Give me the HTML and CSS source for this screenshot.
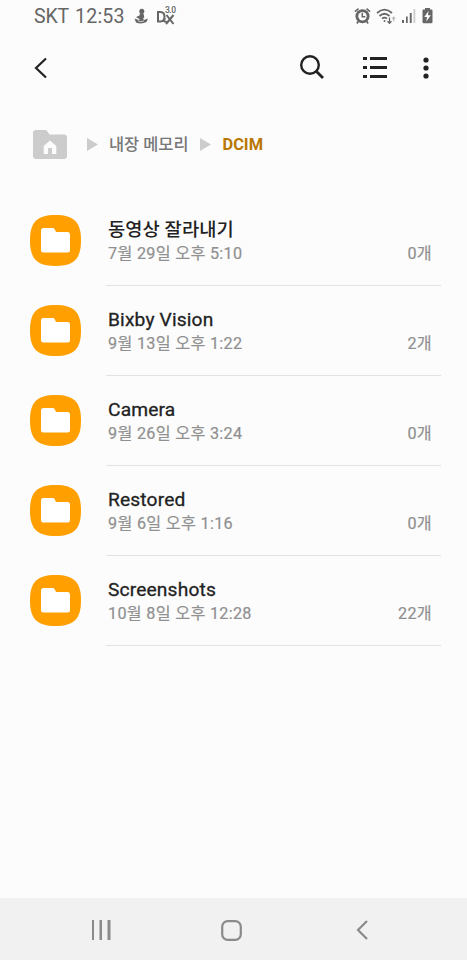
FILE: index.html
```html
<!DOCTYPE html>
<html lang="ko">
<head>
<meta charset="utf-8">
<title>DCIM</title>
<link rel="stylesheet" href="styles.css">
</head>
<body>
<svg class="defs" width="0" height="0">
  <symbol id="folder" viewBox="0 0 51 51">
    <path fill="#ffa000" d="M25.500 0C44 0 51 7 51 25.500S44 51 25.500 51 0 44 0 25.500 7 0 25.500 0Z"/>
    <path fill="#fff" d="M13.500 13h9q1.500 0 2.200 1.300l1.300 2.700h11.500q2.500 0 2.500 2.500v15.500q0 2.500-2.500 2.500h-24q-2.500 0-2.500-2.500v-19.500q0-2.500 2.500-2.500Z"/>
  </symbol>
</svg>
<div class="screen">
  <header class="status">
    <span class="carrier">SKT</span><span class="clock">12:53</span>
    <svg class="st-person" width="16" height="17" viewBox="0 0 16 17" fill="#666"><circle cx="8.800" cy="3.300" r="2.500"/><path d="M7 5l3.500.5.8 4L8 12l-5-3 3.500-1.500Z"/><path d="M1.500 10.500l4 1.500 4-2.500 1.500 2.500 4-1.500-1.500 3.500q-5 2.500-10.500.500Z"/><path stroke="#fcfcfc" stroke-width=".7" fill="none" d="M5 12.800l3 1 3-1"/></svg>
    <span class="dex"><svg width="20" height="20" viewBox="0 0 20 20" fill="none" stroke="#666" stroke-width="2"><path d="M2 6v9.500h2.500q4 0 4-4.700T4.500 6Z"/><path d="M10.500 9l7 9M17.500 9L10 18"/><path stroke-width="1" d="M6 15.500h5M9 12v5"/></svg><small>3.0</small></span>
    <div class="st-right">
      <svg width="17" height="18" viewBox="0 0 17 18" fill="#666"><circle cx="8.500" cy="9.300" r="7"/><path d="M4 1L.5 4l1 1.300L5 2.300ZM13 1l3.500 3-1 1.300L12 2.300ZM3.500 14l1.500 1-1.500 2-1.300-1ZM13.500 14L12 15l1.500 2 1.300-1Z"/><circle cx="8.500" cy="9.300" r="4.200" fill="#fcfcfc"/><path fill="none" stroke="#666" stroke-width="1.500" d="M8.300 5.800v4h3"/></svg>
      <svg class="wifi" width="20" height="18" viewBox="0 0 20 18" fill="none" stroke="#666" stroke-width="1.700"><path d="M1 6Q8.500-.8 16 6M3.500 9q5-4.500 10 0M6 11.700q2.500-2.200 5 0"/><circle cx="8.500" cy="14" r="1" fill="#666" stroke="none"/><path stroke-width="1.300" d="M13.500 10.500v6M11.500 14.300l2 2 2-2"/><path stroke="#bbb" stroke-width="1.200" d="M17.700 14.500V10M16.300 12l1.400-2 1.400 2"/></svg>
      <svg class="signal" width="14" height="16" viewBox="0 0 14 16"><path fill="#666" d="M0 12h2v3H0ZM4 8.500h1.700V15H4ZM7.800 5h1.900v10H7.800Z"/><path fill="#ccc" d="M11.500 1h1.800v14h-1.800Z"/></svg>
      <svg class="battery" width="11" height="16" viewBox="0 0 11 16"><path fill="#666" d="M3 0h5v1.500h1.500q1 0 1 1V14q0 1.300-1.300 1.300H1.800Q.5 15.300.5 14V2.500q0-1 1-1H3Z"/><path fill="#fff" d="M6.500 3L2.300 9H5l-.7 4.500L8.800 7.300H6Z"/></svg>
    </div>
  </header>
  <nav class="toolbar">
    <svg class="back" width="14" height="22" viewBox="0 0 14 22" fill="none" stroke="#222" stroke-width="2.200"><path d="M12 1.500L2 11l10 9.500"/></svg>
    <svg class="search" width="24" height="24" viewBox="0 0 24 24" fill="none" stroke="#222" stroke-width="2.400"><circle cx="10" cy="10" r="8.800"/><path stroke-width="2.800" d="M16 16l7 7"/></svg>
    <svg class="list" width="24" height="22" viewBox="0 0 24 22" fill="#222"><path d="M0 0h4v3H0ZM7 0h17v3H7ZM0 9h4v3H0ZM7 9h17v3H7ZM0 18h4v3H0ZM7 18h17v3H7Z"/></svg>
    <svg class="more" width="6" height="22" viewBox="0 0 6 22" fill="#222"><circle cx="3" cy="3" r="2.600"/><circle cx="3" cy="11" r="2.600"/><circle cx="3" cy="19" r="2.600"/></svg>
  </nav>
  <div class="crumbs">
    <svg width="34" height="29" viewBox="0 0 34 29"><path fill="#ccc" d="M3 0h9q1.500 0 2.300 1.300L16.500 4.500H31q3 0 3 3V26q0 3-3 3H3q-3 0-3-3V3Q0 0 3 0Z"/><path fill="#fcfcfc" d="M17 10.500l6.300 5.500v8h-4.300v-6h-4v6h-4.300v-8Z"/></svg>
    <svg class="tri1" width="11" height="13" viewBox="0 0 11 13"><path fill="#ccc" d="M0 0l11 6.500L0 13Z"/></svg>
    <span class="crumb">내장 메모리</span>
    <svg class="tri2" width="11" height="13" viewBox="0 0 11 13"><path fill="#ccc" d="M0 0l11 6.500L0 13Z"/></svg>
    <span class="crumb current">DCIM</span>
  </div>
  <main>
    <div class="row"><svg class="icon"><use href="#folder"/></svg><div class="info"><div class="name ko">동영상 잘라내기</div><div class="meta"><span>7월 29일 오후 5:10</span><span>0개</span></div></div></div>
    <div class="row"><svg class="icon"><use href="#folder"/></svg><div class="info"><div class="name">Bixby Vision</div><div class="meta"><span>9월 13일 오후 1:22</span><span>2개</span></div></div></div>
    <div class="row"><svg class="icon"><use href="#folder"/></svg><div class="info"><div class="name">Camera</div><div class="meta"><span>9월 26일 오후 3:24</span><span>0개</span></div></div></div>
    <div class="row"><svg class="icon"><use href="#folder"/></svg><div class="info"><div class="name">Restored</div><div class="meta"><span>9월 6일 오후 1:16</span><span>0개</span></div></div></div>
    <div class="row"><svg class="icon"><use href="#folder"/></svg><div class="info"><div class="name">Screenshots</div><div class="meta"><span>10월 8일 오후 12:28</span><span>22개</span></div></div></div>
  </main>
  <footer class="navbar">
    <svg width="19" height="20" viewBox="0 0 19 20" fill="#8a8a8a"><path d="M0 0h2v20H0ZM7.500 0h2.500v20H7.500ZM15.500 0h3v20h-3Z"/></svg>
    <svg class="home" width="21" height="21" viewBox="0 0 21 21" fill="none" stroke="#8a8a8a" stroke-width="2.200"><rect x="1.200" y="1.200" width="18.600" height="18.600" rx="5.500"/></svg>
    <svg class="prev" width="12" height="20" viewBox="0 0 12 20" fill="none" stroke="#8a8a8a" stroke-width="2.200"><path d="M11 1L2 10l9 9"/></svg>
  </footer>
</div>
</body>
</html>
```
FILE: styles.css
```css
* { box-sizing: border-box; }
body { margin: 0; background: #fcfcfc; font-family: Roboto, "Noto Sans CJK KR", sans-serif; }
svg { display: block; flex: none; }
.defs { position: absolute; }
.screen { width: 467px; height: 960px; display: flex; flex-direction: column; overflow: hidden; }
.status { height: 32px; padding: 0 34px 0 34px; display: flex; align-items: center; color: #666; font-size: 19.500px; white-space: nowrap; }
.carrier { width: 36px; letter-spacing: -.2px; }
.clock { width: 50px; margin-left: 5px; font-size: 19.600px; letter-spacing: .2px; }
.st-person { margin-left: 8px; }
.dex { position: relative; margin-left: 7px; }
.dex small { position: absolute; left: 9px; top: 0; font-size: 8.500px; line-height: 9px; font-weight: 500; letter-spacing: -.5px; }
.st-right { margin-left: auto; display: flex; align-items: center; }
.wifi { margin-left: 5px; }
.signal { margin-left: 6px; }
.battery { margin-left: 6px; }
.toolbar { height: 71px; padding: 0 38px 0 34px; display: flex; align-items: center; }
.search { margin-left: 252px; margin-top: -1px; }
.list { margin-left: 39px; }
.more { margin-left: 36px; }
.crumbs { height: 82px; padding-left: 33px; display: flex; align-items: center; }
.crumb { padding-top: 2px; font-size: 16.400px; line-height: 24px; font-weight: 500; color: #777; white-space: nowrap; }
.current { font-weight: 700; color: #b97600; }
.tri1 { margin: 0 11px 0 20px; }
.tri2 { margin: 0 11px 0 12px; }
main { margin-top: 11px; flex: 1; }
.row { height: 90px; padding: 0 26px 0 30px; display: flex; align-items: center; }
.icon { width: 51px; height: 51px; margin-bottom: 1px; }
.info { height: 90px; flex: 1; margin-left: 25px; padding: 20px 9px 0 2px; border-bottom: 1px solid #e2e2e2; }
.name { height: 26px; line-height: 28px; font-size: 19.200px; font-weight: 400; -webkit-text-stroke: .3px #222; color: #222; letter-spacing: .15px; }
.ko { font-size: 18.700px; font-weight: 500; letter-spacing: .1px; -webkit-text-stroke: 0; line-height: 29px; }
.meta { display: flex; justify-content: space-between; height: 24px; line-height: 23px; font-size: 16.200px; color: #909090; letter-spacing: .3px; -webkit-text-stroke: .2px #909090; }
.navbar { height: 62px; background: #f1f1f1; display: flex; align-items: center; padding: 2px 98px 0 92px; }
.home { margin-left: 110px; }
.prev { margin-left: 114px; }
```
